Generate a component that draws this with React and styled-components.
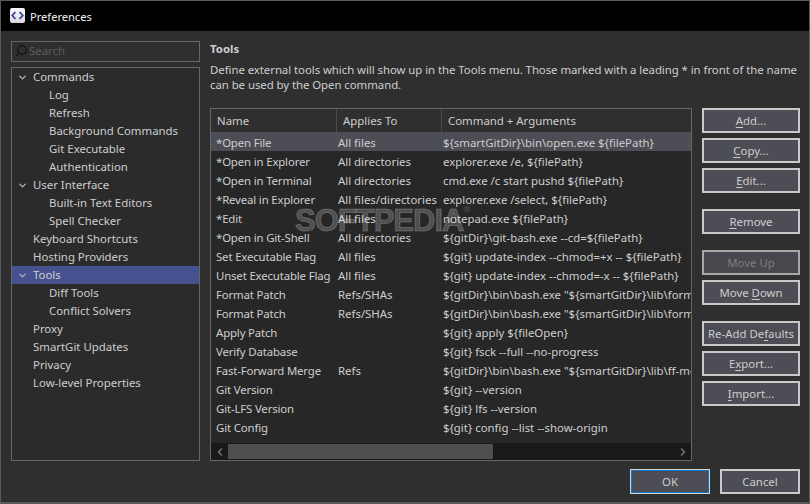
import React from "react"
import styled, { createGlobalStyle } from "styled-components"
import { ChevronDown, ChevronLeft, ChevronRight, Search } from "lucide-react"

const GlobalStyle = createGlobalStyle`
  html, body {
    margin: 0;
    padding: 0;
    background: #2f2f2f;
  }
  body {
    font-family: "Noto Sans", "Open Sans", "Liberation Sans", sans-serif;
    font-size: 11.4px;
    color: #cecece;
  }
`

const Window = styled.div`
  width: 810px;
  height: 504px;
  box-sizing: border-box;
  border: 1px solid #5a5a5a;
  border-bottom-width: 2px;
  display: flex;
  flex-direction: column;
  background: #2f2f2f;
  overflow: hidden;
  position: relative;
`

const TitleBar = styled.div`
  height: 30px;
  flex: none;
  background: #000;
  display: flex;
  align-items: center;
  padding-left: 9px;
  gap: 5px;
  color: #f0f0f0;
  font-size: 11.1px;
`

const AppIcon = styled.div`
  width: 15px;
  height: 15px;
  background: linear-gradient(#fbfbfd, #d8d8de);
  border-radius: 2px;
  display: flex;
  align-items: center;
  justify-content: center;
  margin-top: -1px;
`

const Body = styled.div`
  flex: 1;
  min-height: 0;
  display: flex;
  padding: 10px 9px 8px 10px;
  gap: 10px;
`

const LeftColumn = styled.div`
  width: 189px;
  flex: none;
  display: flex;
  flex-direction: column;
  gap: 5px;
  margin-bottom: 33px;
`

const SearchBox = styled.div`
  height: 21px;
  flex: none;
  box-sizing: border-box;
  border: 1px solid #666;
  display: flex;
  align-items: center;
  padding: 0 0 3px 3px;
  gap: 1px;
  color: #5e5e5e;
`

const Tree = styled.div`
  flex: 1;
  box-sizing: border-box;
  border: 1px solid #666;
  background: #2b2b2b;
`

const TreeRow = styled.div`
  height: 18px;
  line-height: 18px;
  display: flex;
  align-items: center;
  padding-left: ${(props) => 21 + props.$level * 16}px;
  position: relative;
  white-space: nowrap;
  background: ${(props) => (props.$selected ? "#465190" : "transparent")};
`

const Twisty = styled.span`
  position: absolute;
  left: 5px;
  top: 4px;
  display: flex;
  color: #b4b4b4;
`

const RightColumn = styled.div`
  flex: 1;
  min-width: 0;
  display: flex;
  flex-direction: column;
`

const Heading = styled.div`
  font-weight: 700;
  height: 17px;
  line-height: 17px;
  margin-top: -1px;
`

const Description = styled.div`
  margin-top: 5px;
  line-height: 15px;
  height: 30px;
  white-space: nowrap;
  letter-spacing: -0.05px;
`

const Content = styled.div`
  margin-top: 16px;
  display: flex;
  gap: 10px;
  flex: none;
  height: 353px;
`

const TableFrame = styled.div`
  width: 482px;
  flex: none;
  box-sizing: border-box;
  border: 1px solid #666;
  background: #272727;
  display: flex;
  flex-direction: column;
  overflow: hidden;
`

const HeaderRow = styled.div`
  height: 23px;
  flex: none;
  display: grid;
  grid-template-columns: 126px 105px 1fr;
  background: #2f2f2f;
`

const HeaderCell = styled.div`
  box-sizing: border-box;
  padding-left: 6px;
  line-height: 24px;
  border-right: 1px solid #4c4c4c;
  &:last-child {
    border-right: 0;
  }
`

const Rows = styled.div`
  flex: 1;
  min-height: 0;
  overflow: hidden;
`

const Row = styled.div`
  height: 19px;
  line-height: 21px;
  display: grid;
  grid-template-columns: 126px 105px 1fr;
  white-space: nowrap;
  background: ${(props) => (props.$selected ? "#4d4d55" : "transparent")};
`

const Cell = styled.div`
  padding-left: 1px;
  overflow: hidden;
`

const NameCell = styled(Cell)`
  padding-left: 5px;
  letter-spacing: -0.15px;
`

const ScrollBar = styled.div`
  height: 17px;
  flex: none;
  background: #191919;
  display: flex;
  align-items: center;
  color: #777;
`

const ScrollEnd = styled.div`
  width: 17px;
  flex: none;
  display: flex;
  justify-content: center;
`

const ScrollTrack = styled.div`
  flex: 1;
`

const ScrollThumb = styled.div`
  width: 265px;
  height: 15px;
  background: #4f4f4f;
`

const ButtonColumn = styled.div`
  width: 98px;
  flex: none;
  display: flex;
  flex-direction: column;
`

const Button = styled.div`
  width: ${(props) => props.$width || "98px"};
  height: 25px;
  box-sizing: border-box;
  border: 2px solid ${(props) => (props.$disabled ? "#a8a8a8" : "#c9c9c9")};
  background: ${(props) => (props.$disabled ? "#47474d" : "#4d4d55")};
  color: ${(props) => (props.$disabled ? "#7e7e7e" : "#cecece")};
  display: flex;
  align-items: center;
  justify-content: center;
  margin-top: ${(props) => props.$gap ?? 5}px;
  flex: none;
  white-space: nowrap;
  u {
    text-underline-offset: 2px;
  }
`

const DefaultButton = styled(Button)`
  border: 1px solid #d6d6d6;
  box-shadow: inset 0 0 0 1px #0a78d0;
`

const Footer = styled.div`
  position: absolute;
  right: 9px;
  bottom: 8px;
  display: flex;
  gap: 10px;
`

const Watermark = styled.div`
  position: absolute;
  left: 294px;
  top: 203px;
  font-family: "Liberation Sans", sans-serif;
  font-weight: 700;
  font-size: 31px;
  line-height: 34px;
  letter-spacing: -1px;
  color: rgba(255, 255, 255, 0.2);
  -webkit-text-stroke: 1px rgba(255, 255, 255, 0.2);
  pointer-events: none;
  sup {
    font-size: 9px;
    line-height: 0;
    vertical-align: 18px;
    letter-spacing: 0;
    -webkit-text-stroke: 0;
  }
`

const treeItems = [
  { label: "Commands", level: 0, open: true },
  { label: "Log", level: 1 },
  { label: "Refresh", level: 1 },
  { label: "Background Commands", level: 1 },
  { label: "Git Executable", level: 1 },
  { label: "Authentication", level: 1 },
  { label: "User Interface", level: 0, open: true },
  { label: "Built-in Text Editors", level: 1 },
  { label: "Spell Checker", level: 1 },
  { label: "Keyboard Shortcuts", level: 0 },
  { label: "Hosting Providers", level: 0 },
  { label: "Tools", level: 0, open: true, selected: true },
  { label: "Diff Tools", level: 1 },
  { label: "Conflict Solvers", level: 1 },
  { label: "Proxy", level: 0 },
  { label: "SmartGit Updates", level: 0 },
  { label: "Privacy", level: 0 },
  { label: "Low-level Properties", level: 0 },
]

const tools = [
  ["*Open File", "All files", "${smartGitDir}\\bin\\open.exe ${filePath}"],
  ["*Open in Explorer", "All directories", "explorer.exe /e, ${filePath}"],
  ["*Open in Terminal", "All directories", "cmd.exe /c start pushd ${filePath}"],
  ["*Reveal in Explorer", "All files/directories", "explorer.exe /select, ${filePath}"],
  ["*Edit", "All files", "notepad.exe ${filePath}"],
  ["*Open in Git-Shell", "All directories", "${gitDir}\\git-bash.exe --cd=${filePath}"],
  ["Set Executable Flag", "All files", "${git} update-index --chmod=+x -- ${filePath}"],
  ["Unset Executable Flag", "All files", "${git} update-index --chmod=-x -- ${filePath}"],
  ["Format Patch", "Refs/SHAs", "${gitDir}\\bin\\bash.exe \"${smartGitDir}\\lib\\format-patch.sh\""],
  ["Format Patch", "Refs/SHAs", "${gitDir}\\bin\\bash.exe \"${smartGitDir}\\lib\\format-patch.sh\""],
  ["Apply Patch", "", "${git} apply ${fileOpen}"],
  ["Verify Database", "", "${git} fsck --full --no-progress"],
  ["Fast-Forward Merge", "Refs", "${gitDir}\\bin\\bash.exe \"${smartGitDir}\\lib\\ff-merge.sh\""],
  ["Git Version", "", "${git} --version"],
  ["Git-LFS Version", "", "${git} lfs --version"],
  ["Git Config", "", "${git} config --list --show-origin"],
]

const sideButtons = [
  { label: "Add...", key: "A", gap: 0 },
  { label: "Copy...", key: "C" },
  { label: "Edit...", key: "E" },
  { label: "Remove", key: "R", gap: 16 },
  { label: "Move Up", gap: 16, disabled: true },
  { label: "Move Down", key: "D", prefix: "Move " },
  { label: "Re-Add Defaults", key: "f", prefix: "Re-Add De", gap: 16 },
  { label: "Export...", key: "x", prefix: "E" },
  { label: "Import...", key: "I" },
]

const Mnemonic = ({ item }) => {
  if (!item.key) return item.label
  const prefix = item.prefix || ""
  return (
    <span>
      {prefix}
      <u>{item.key}</u>
      {item.label.slice(prefix.length + 1)}
    </span>
  )
}

const App = () => {
  return (
    <>
      <GlobalStyle />
      <Window>
        <TitleBar>
          <AppIcon>
            <svg width="13" height="9" viewBox="0 0 13 9" fill="none" stroke="#3a3f9a" strokeWidth="1.8">
              <path d="M4.5 1 1.2 4.5 4.5 8M8.5 1l3.3 3.5L8.5 8" />
            </svg>
          </AppIcon>
          Preferences
        </TitleBar>
        <Body>
          <LeftColumn>
            <SearchBox>
              <Search size={13} strokeWidth={2.4} color="#141414" style={{ transform: "scaleX(-1)" }} />
              Search
            </SearchBox>
            <Tree>
              {treeItems.map((item) => (
                <TreeRow key={item.label} $level={item.level} $selected={item.selected}>
                  {item.open && (
                    <Twisty>
                      <ChevronDown size={11} strokeWidth={3} />
                    </Twisty>
                  )}
                  {item.label}
                </TreeRow>
              ))}
            </Tree>
          </LeftColumn>
          <RightColumn>
            <Heading>Tools</Heading>
            <Description>
              Define external tools which will show up in the Tools menu. Those marked with a leading * in front of the name
              <br />
              can be used by the Open command.
            </Description>
            <Content>
              <TableFrame>
                <HeaderRow>
                  <HeaderCell>Name</HeaderCell>
                  <HeaderCell>Applies To</HeaderCell>
                  <HeaderCell>Command + Arguments</HeaderCell>
                </HeaderRow>
                <Rows>
                  {tools.map((tool, index) => (
                    <Row key={index} $selected={index === 0}>
                      <NameCell>{tool[0]}</NameCell>
                      <Cell>{tool[1]}</Cell>
                      <Cell>{tool[2]}</Cell>
                    </Row>
                  ))}
                </Rows>
                <ScrollBar>
                  <ScrollEnd>
                    <ChevronLeft size={12} strokeWidth={3} />
                  </ScrollEnd>
                  <ScrollTrack>
                    <ScrollThumb />
                  </ScrollTrack>
                  <ScrollEnd>
                    <ChevronRight size={12} strokeWidth={3} />
                  </ScrollEnd>
                </ScrollBar>
              </TableFrame>
              <ButtonColumn>
                {sideButtons.map((item) => (
                  <Button key={item.label} $gap={item.gap} $disabled={item.disabled}>
                    <Mnemonic item={item} />
                  </Button>
                ))}
              </ButtonColumn>
            </Content>
          </RightColumn>
        </Body>
        <Footer>
          <DefaultButton $width="80px" $gap={0}>OK</DefaultButton>
          <Button $width="80px" $gap={0}>Cancel</Button>
        </Footer>
        <Watermark>
          SOFTPEDIA<sup>®</sup>
        </Watermark>
      </Window>
    </>
  )
}

export default App
